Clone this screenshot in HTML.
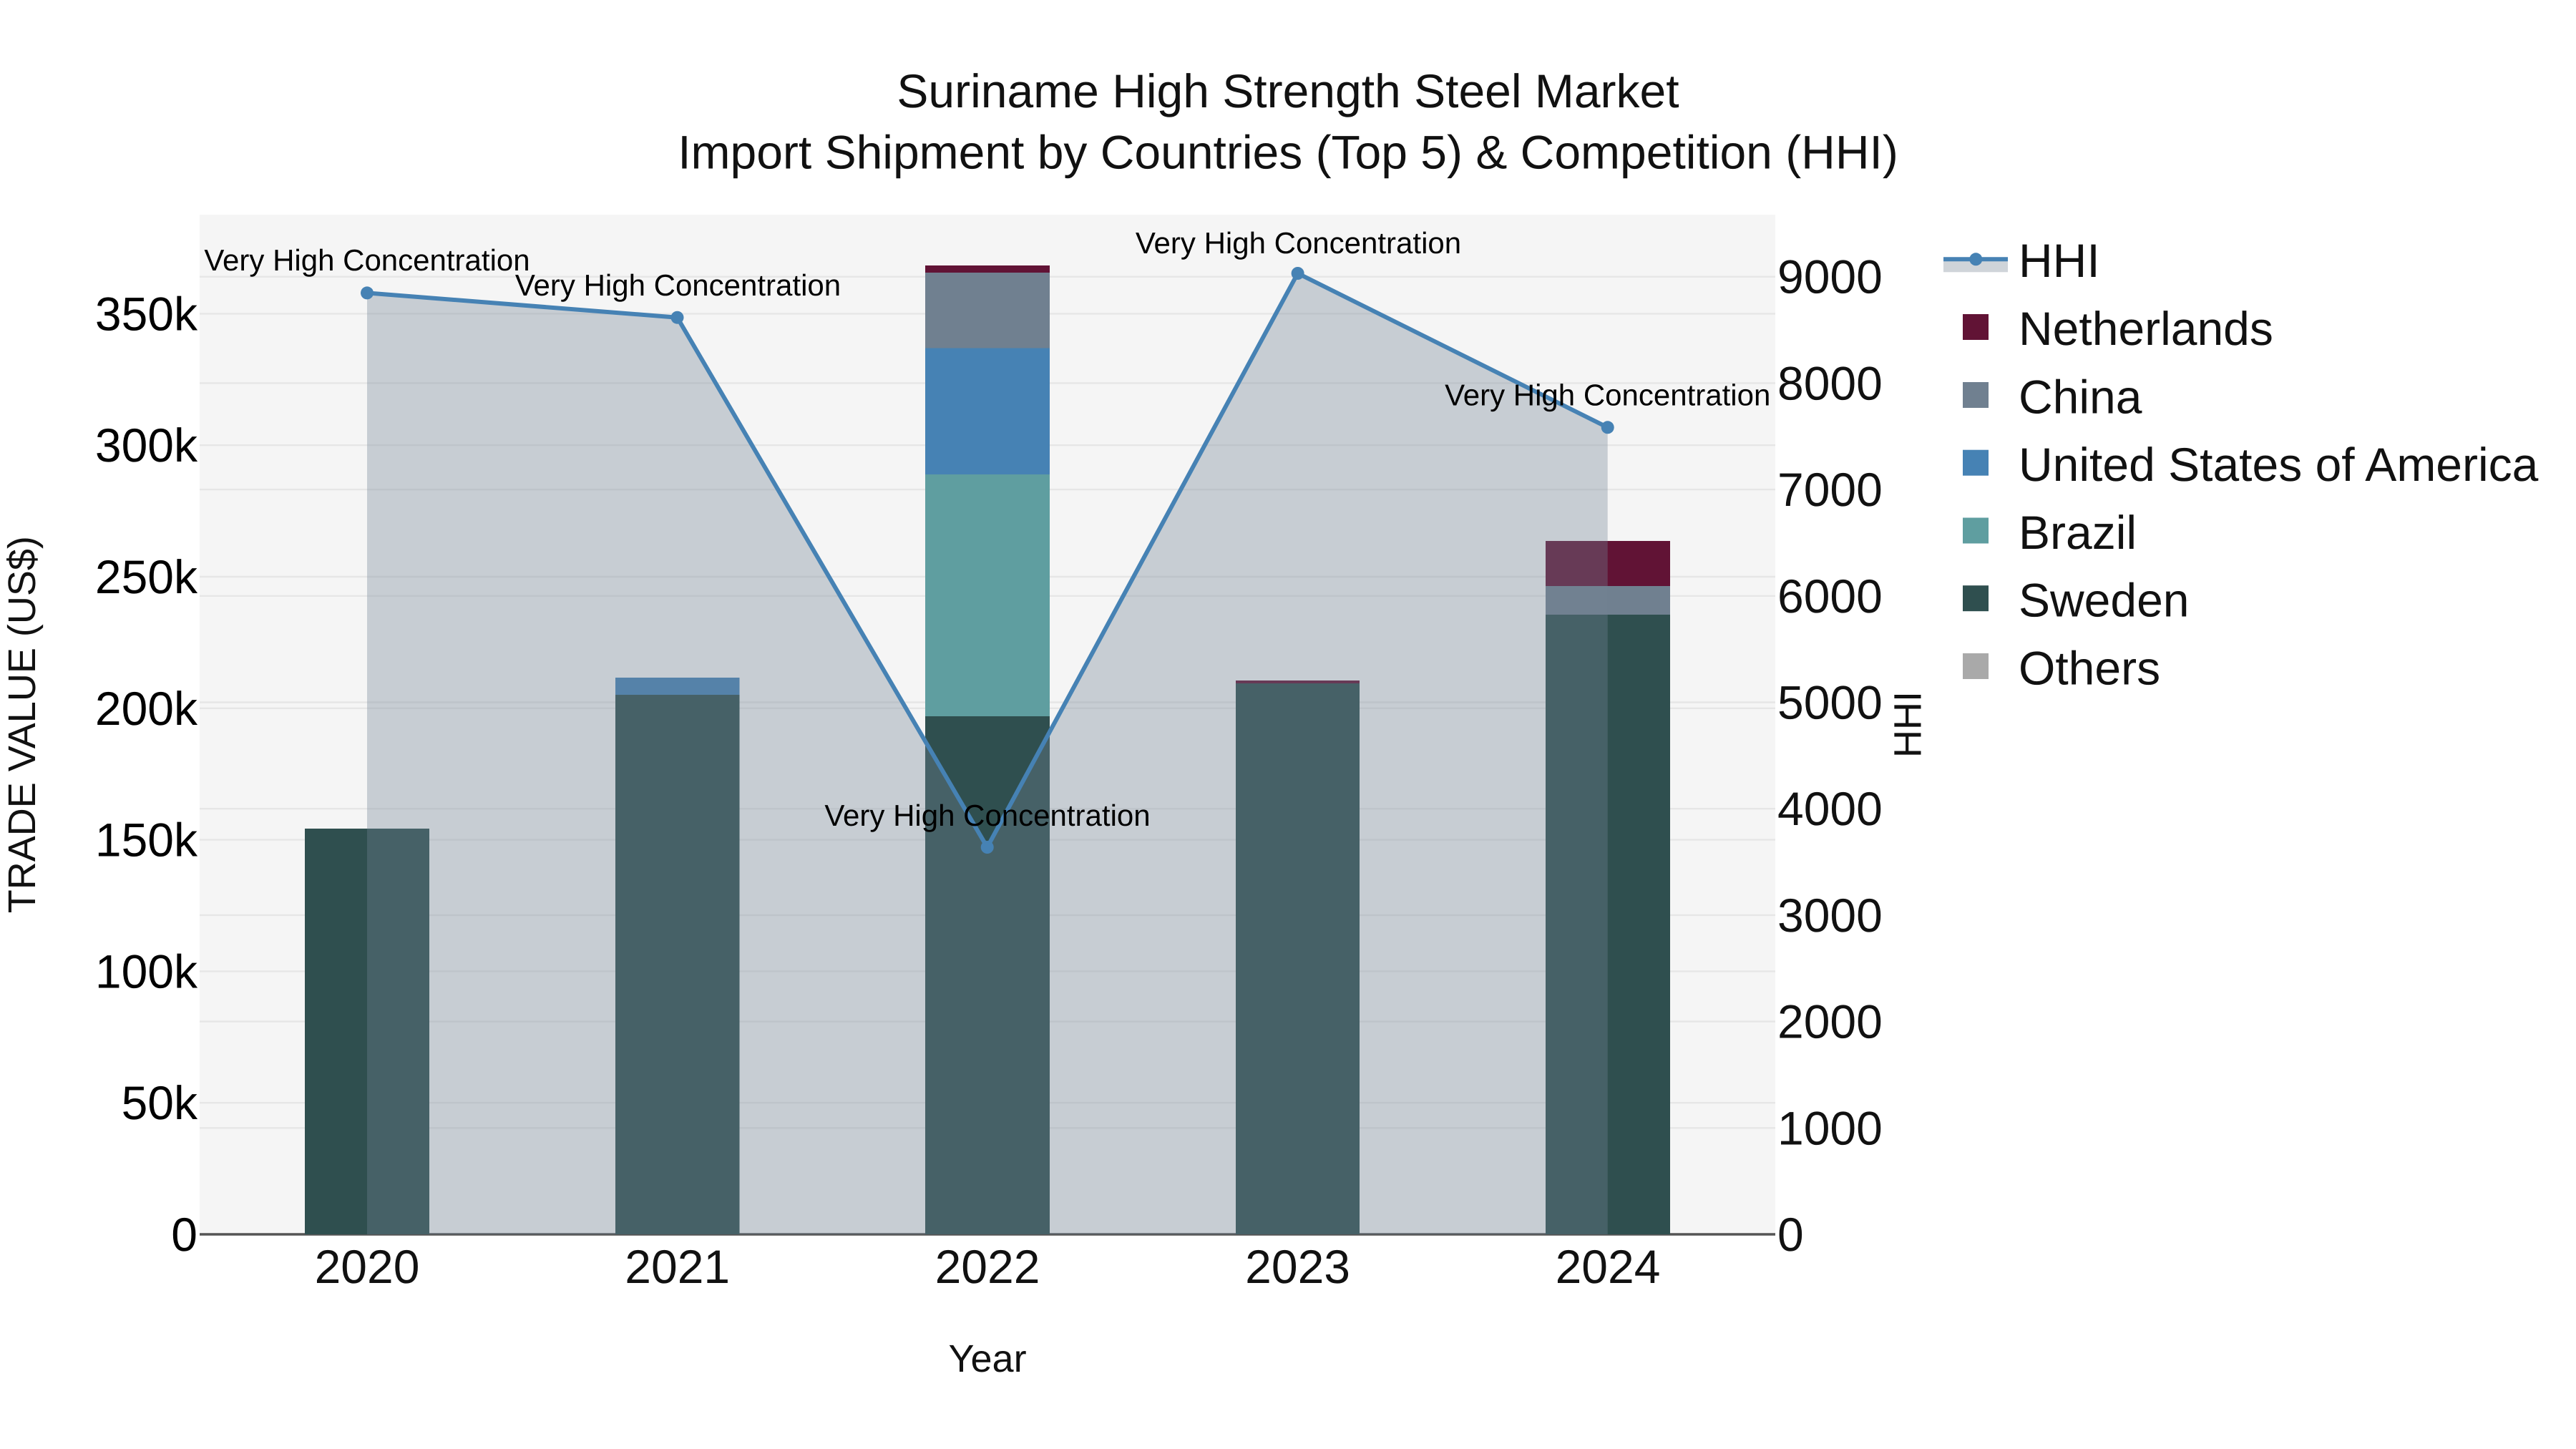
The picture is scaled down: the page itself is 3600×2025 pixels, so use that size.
<!DOCTYPE html>
<html>
<head>
<meta charset="utf-8">
<title>Suriname High Strength Steel Market</title>
<style>
html,body{margin:0;padding:0;background:#fff;width:3600px;height:2025px;overflow:hidden}
svg{display:block}
text{font-family:"Liberation Sans",Arial,sans-serif;text-rendering:geometricPrecision}
</style>
</head>
<body>
<svg xmlns="http://www.w3.org/2000/svg" width="3600" height="2025" viewBox="0 0 3600 2025">
<rect width="3600" height="2025" fill="#fff"/>
<rect x="279" y="300" width="2202" height="1425" fill="#f5f5f5"/>
<g stroke="#e6e6e6" stroke-width="2.4" fill="none">
<path d="M279 1541.2H2481M279 1357.4H2481M279 1173.6H2481M279 989.8H2481M279 806H2481M279 622.2H2481M279 438.4H2481"/>
<path d="M279 1576.3H2481M279 1427.6H2481M279 1278.9H2481M279 1130.2H2481M279 981.5H2481M279 832.8H2481M279 684.1H2481M279 535.4H2481M279 386.7H2481"/>
</g>
<path d="M279 1725H2481" stroke="#555" stroke-width="3.4" fill="none"/>
<g>
<rect x="426" y="1158" width="174" height="567" fill="#2f4f4f"/>
<rect x="860" y="947" width="173.5" height="24" fill="#4682b4"/>
<rect x="860" y="971" width="173.5" height="754" fill="#2f4f4f"/>
<rect x="1293" y="371" width="174" height="10" fill="#611335"/>
<rect x="1293" y="381" width="174" height="105.5" fill="#708090"/>
<rect x="1293" y="486.5" width="174" height="176.5" fill="#4682b4"/>
<rect x="1293" y="663" width="174" height="338" fill="#5f9ea0"/>
<rect x="1293" y="1001" width="174" height="724" fill="#2f4f4f"/>
<rect x="1727" y="951" width="173" height="4" fill="#611335"/>
<rect x="1727" y="955" width="173" height="770" fill="#2f4f4f"/>
<rect x="2160" y="756" width="174" height="63" fill="#611335"/>
<rect x="2160" y="819" width="174" height="40" fill="#708090"/>
<rect x="2160" y="859" width="174" height="866" fill="#2f4f4f"/>
</g>
<path d="M513 409.4L946.5 443.7L1379.7 1184L1813.6 382L2246.7 597.3V1725H513Z" fill="rgb(116,133,149)" fill-opacity="0.35"/>
<path d="M513 409.4L946.5 443.7L1379.7 1184L1813.6 382L2246.7 597.3" fill="none" stroke="#4682b4" stroke-width="6" stroke-linejoin="round"/>
<g fill="#4682b4">
<circle cx="513" cy="409.4" r="9"/>
<circle cx="946.5" cy="443.7" r="9"/>
<circle cx="1379.7" cy="1184" r="9"/>
<circle cx="1813.6" cy="382" r="9"/>
<circle cx="2246.7" cy="597.3" r="9"/>
</g>
<g font-size="42" fill="#000" text-anchor="middle">
<text x="513" y="378">Very High Concentration</text>
<text x="947.5" y="413">Very High Concentration</text>
<text x="1380" y="1154">Very High Concentration</text>
<text x="1814.5" y="354">Very High Concentration</text>
<text x="2246.7" y="566.7">Very High Concentration</text>
</g>
<g font-size="66" fill="#000" text-anchor="end">
<text x="276" y="461.4">350k</text>
<text x="276" y="645.2">300k</text>
<text x="276" y="829">250k</text>
<text x="276" y="1012.8">200k</text>
<text x="276" y="1196.6">150k</text>
<text x="276" y="1380.4">100k</text>
<text x="276" y="1564.2">50k</text>
<text x="276" y="1748">0</text>
</g>
<g font-size="66" fill="#111" text-anchor="start">
<text x="2484" y="409.7">9000</text>
<text x="2484" y="558.4">8000</text>
<text x="2484" y="707.1">7000</text>
<text x="2484" y="855.8">6000</text>
<text x="2484" y="1004.5">5000</text>
<text x="2484" y="1153.2">4000</text>
<text x="2484" y="1301.9">3000</text>
<text x="2484" y="1450.6">2000</text>
<text x="2484" y="1599.3">1000</text>
<text x="2484" y="1748">0</text>
</g>
<g font-size="66" fill="#111" text-anchor="middle">
<text x="513" y="1793">2020</text>
<text x="946.7" y="1793">2021</text>
<text x="1380" y="1793">2022</text>
<text x="1813.6" y="1793">2023</text>
<text x="2247" y="1793">2024</text>
</g>
<g fill="#111" text-anchor="middle" font-size="66">
<text x="1800" y="150">Suriname High Strength Steel Market</text>
<text x="1800" y="235.7">Import Shipment by Countries (Top 5) &amp; Competition (HHI)</text>
</g>
<text x="1380" y="1917" font-size="54" fill="#111" text-anchor="middle">Year</text>
<text transform="translate(49 1012.7) rotate(-90)" font-size="54" fill="#111" text-anchor="middle">TRADE VALUE (US$)</text>
<text transform="translate(2684.7 1012.5) rotate(-90)" font-size="54" fill="#111" text-anchor="middle">HHI</text>
<rect x="2716" y="362.3" width="90" height="18" fill="#cfd4d9"/>
<path d="M2716 362.3H2806" stroke="#4682b4" stroke-width="6"/>
<circle cx="2761.3" cy="362.3" r="9" fill="#4682b4"/>
<rect x="2743" y="439" width="36" height="36" fill="#611335"/>
<rect x="2743" y="534" width="36" height="36" fill="#708090"/>
<rect x="2743" y="628.7" width="36" height="36" fill="#4682b4"/>
<rect x="2743" y="723.5" width="36" height="36" fill="#5f9ea0"/>
<rect x="2743" y="818.2" width="36" height="36" fill="#2f4f4f"/>
<rect x="2743" y="913" width="36" height="36" fill="#a9a9a9"/>
<g font-size="66" fill="#111">
<text x="2821" y="386.8">HHI</text>
<text x="2821" y="482">Netherlands</text>
<text x="2821" y="577.4">China</text>
<text x="2821" y="672">United States of America</text>
<text x="2821" y="766.8">Brazil</text>
<text x="2821" y="861.6">Sweden</text>
<text x="2821" y="956.4">Others</text>
</g>
</svg>
</body>
</html>
